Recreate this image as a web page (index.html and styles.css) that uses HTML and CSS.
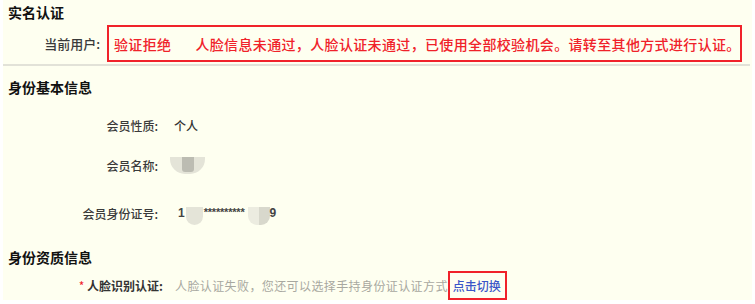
FILE: index.html
```html
<!DOCTYPE html>
<html lang="zh-CN">
<head>
  <meta charset="UTF-8" />
  <meta name="viewport" content="width=device-width, initial-scale=1.0"/>
  <title>实名认证</title>
  <link rel="stylesheet" href="styles.css">
</head>
<body>
  <div class="page">
    <div class="section section-auth">
      <h2 class="section-title">实名认证</h2>
      <div class="user-row">
        <span class="user-label">当前用户:</span>
        <div class="status-box">
          <span class="status">验证拒绝</span>
          <span class="status-msg">人脸信息未通过，人脸认证未通过，已使用全部校验机会。请转至其他方式进行认证。</span>
        </div>
      </div>
    </div>

    <div class="section">
      <h2 class="section-title">身份基本信息</h2>
      <div class="field field-1">
        <span class="field-label">会员性质:</span>
        <span class="field-value">个人</span>
      </div>
      <div class="field field-2">
        <span class="field-label">会员名称:</span>
        <span class="field-value">
          <span class="blur blur-name"><span class="blur-core"></span></span>
        </span>
      </div>
      <div class="field field-3">
        <span class="field-label">会员身份证号:</span>
        <span class="field-value id-number">
          <span class="digit">1</span><span class="blur blur-id"></span><span class="stars">**********</span><span class="blur blur-id blur-id-end"></span><span class="digit">9</span>
        </span>
      </div>
    </div>

    <div class="section">
      <h2 class="section-title title-qual">身份资质信息</h2>
      <div class="field field-face">
        <span class="field-label"><i class="required">*</i> 人脸识别认证:</span>
        <span class="field-value muted">人脸认证失败，您还可以选择手持身份证认证方式</span>
        <a class="switch-link" href="#">点击切换</a>
      </div>
    </div>
  </div>
</body>
</html>
```

FILE: styles.css
```css
:root {
  --page-bg: #fefff0;
  --text-color: #333;
  --title-color: #111;
  --red: #f0222a;
  --muted: #a8a8a0;
  --link: #3a55c8;
  --line: #e2e2d8;
}

body {
  margin: 0;
  background-color: #fff;
  font-family: "Noto Sans CJK SC", "Liberation Sans", sans-serif;
  color: var(--text-color);
}

.page {
  margin: 0 3px;
  height: 300px;
  overflow: hidden;
  background-color: var(--page-bg);
}

.section-title {
  margin: 0;
  padding-left: 5px;
  font-size: 14px;
  line-height: 20px;
  font-weight: bold;
  color: var(--title-color);
}

.section-auth {
  padding-top: 2px;
  padding-bottom: 2px;
  margin-right: 2px;
  border-bottom: 2px solid var(--line);
}

.user-row {
  display: flex;
  align-items: center;
  margin-top: 3px;
}

.user-label {
  width: 97px;
  text-align: right;
  font-size: 13px;
  font-weight: 500;
  color: #3a3a3a;
  padding-right: 7px;
}

.status-box {
  display: flex;
  align-items: center;
  width: 635px;
  height: 37px;
  box-sizing: border-box;
  border: 2px solid var(--red);
  padding-left: 5px;
  color: var(--red);
  font-size: 14px;
  font-weight: 500;
  letter-spacing: 0.35px;
  white-space: nowrap;
}

.status {
  margin-right: 24px;
}

.section-auth + .section .section-title {
  margin-top: 11px;
}

.field {
  display: flex;
  align-items: center;
  height: 20px;
  font-size: 12px;
}

.field-1 { margin-top: 18px; }
.field-2 { margin-top: 20px; }
.field-3 { margin-top: 28px; }

.field-label {
  width: 155px;
  text-align: right;
  font-weight: 500;
  color: #3a3a3a;
  flex-shrink: 0;
}

.field-value {
  margin-left: 16px;
  display: flex;
  align-items: center;
  font-weight: 500;
}

.blur {
  display: inline-block;
  background-color: #e4e4d8;
}

.blur-name {
  width: 35px;
  height: 17px;
  margin-left: -4px;
  border-radius: 0 0 15px 15px;
  display: flex;
  justify-content: center;
}

.blur-core {
  width: 12px;
  height: 15px;
  background-color: #bcbcb2;
  border-radius: 0 0 3px 3px;
}

.id-number {
  font-family: "Liberation Sans", sans-serif;
  font-size: 12px;
  font-weight: bold;
  color: #444;
  margin-left: 20px;
}

.blur-id {
  width: 17px;
  height: 18px;
  border-radius: 0 0 9px 9px;
  margin-top: 6px;
  margin-left: 1px;
}

.blur-id-end {
  width: 22px;
  margin-left: 2px;
  background: linear-gradient(to right, #ececE0 50%, #d8d8cc 50%);
}

.stars {
  font-size: 11px;
  letter-spacing: -0.2px;
  margin: -3px 1px 0;
}

.title-qual {
  margin-top: 24px;
}

.field-face {
  margin-top: 4px;
  height: 29px;
}

.field-face .field-label {
  width: 160px;
  font-weight: bold;
  color: #333;
}

.required {
  font-style: normal;
  color: var(--red);
  font-weight: normal;
}

.muted {
  margin-left: 12px;
  color: var(--muted);
  font-weight: normal;
  letter-spacing: 0.4px;
}

.switch-link {
  display: flex;
  align-items: center;
  height: 29px;
  box-sizing: border-box;
  border: 2px solid var(--red);
  padding: 0 4px 0 3px;
  color: var(--link);
  font-weight: 500;
  text-decoration: none;
  font-size: 12px;
}
```
